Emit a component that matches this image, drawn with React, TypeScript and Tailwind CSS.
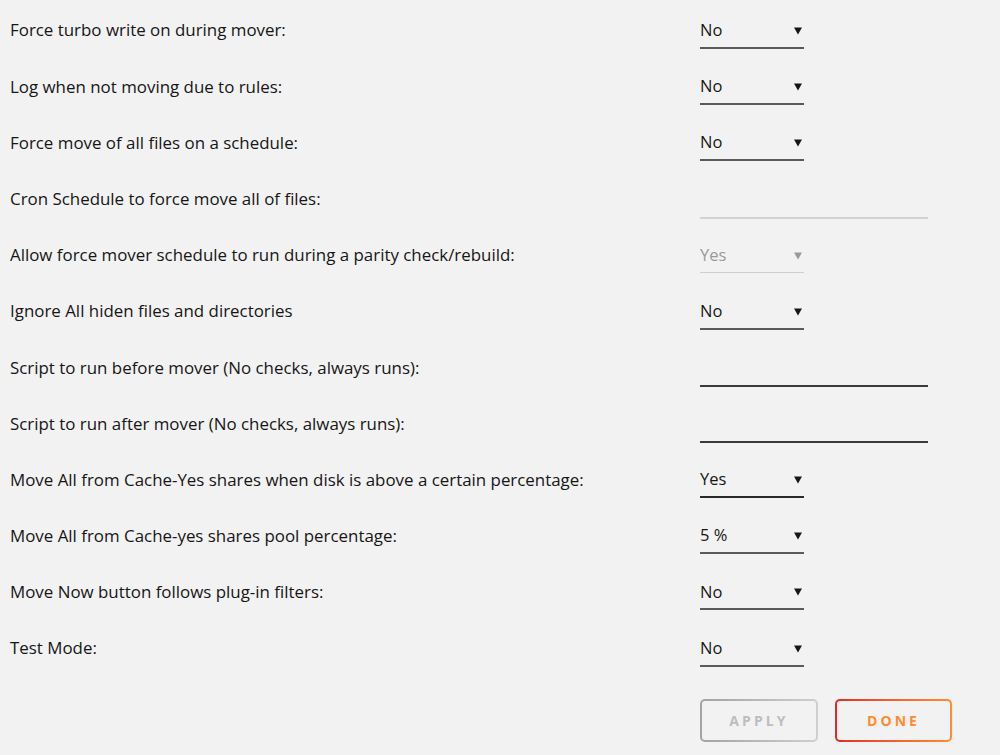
import type { ReactNode } from 'react';

type Field =
  | { kind: 'select'; value: string; disabled?: boolean; dark?: boolean }
  | { kind: 'input'; tone: 'light' | 'dark' };

interface Row {
  label: string;
  field: Field;
}

const rows: Row[] = [
  { label: 'Force turbo write on during mover:', field: { kind: 'select', value: 'No' } },
  { label: 'Log when not moving due to rules:', field: { kind: 'select', value: 'No' } },
  { label: 'Force move of all files on a schedule:', field: { kind: 'select', value: 'No' } },
  { label: 'Cron Schedule to force move all of files:', field: { kind: 'input', tone: 'light' } },
  {
    label: 'Allow force mover schedule to run during a parity check/rebuild:',
    field: { kind: 'select', value: 'Yes', disabled: true },
  },
  { label: 'Ignore All hiden files and directories', field: { kind: 'select', value: 'No' } },
  { label: 'Script to run before mover (No checks, always runs):', field: { kind: 'input', tone: 'dark' } },
  { label: 'Script to run after mover (No checks, always runs):', field: { kind: 'input', tone: 'dark' } },
  {
    label: 'Move All from Cache-Yes shares when disk is above a certain percentage:',
    field: { kind: 'select', value: 'Yes', dark: true },
  },
  { label: 'Move All from Cache-yes shares pool percentage:', field: { kind: 'select', value: '5 %' } },
  { label: 'Move Now button follows plug-in filters:', field: { kind: 'select', value: 'No' } },
  { label: 'Test Mode:', field: { kind: 'select', value: 'No' } },
];

function Select({ value, disabled, dark }: { value: string; disabled?: boolean; dark?: boolean }) {
  const line = disabled
    ? 'border-b border-[#cfcfcf]'
    : dark
      ? 'border-b-2 border-[#2a2a2a]'
      : 'border-b-2 border-[#5a5a5a]';
  const color = disabled ? 'text-[#9a9a9a]' : 'text-[#161616]';
  return (
    <div className={`flex h-[37px] w-[104px] items-center justify-between ${line}`}>
      <span className={`pt-[2px] text-[16.5px] ${color}`}>{value}</span>
      <svg width="8" height="8" viewBox="0 0 8 8" className={`mr-[2px] mt-[3px] ${color}`}>
        <path d="M0 0.5 L8 0.5 L4 7.5 Z" fill="currentColor" />
      </svg>
    </div>
  );
}

function TextInput({ tone }: { tone: 'light' | 'dark' }) {
  const line = tone === 'light' ? 'border-b-2 border-[#d2d2d2]' : 'border-b-2 border-[#3a3a3a]';
  return <div className={`mt-[3px] h-[37px] w-[228px] ${line}`} />;
}

function GradientButton({ children, from, to, text }: { children: ReactNode; from: string; to: string; text: string }) {
  return (
    <div className={`rounded-[5px] bg-gradient-to-r p-[2px] ${from} ${to}`}>
      <div className={`flex h-[39px] items-center justify-center rounded-[3px] bg-[#f2f2f2] text-[14px] font-bold tracking-[0.22em] ${text}`}>
        {children}
      </div>
    </div>
  );
}

export default function App() {
  return (
    <div
      className="min-h-[755px] w-[1000px] bg-[#f2f2f2] pt-[2px] text-[#161616]"
      style={{ fontFamily: '"Open Sans", "Noto Sans", sans-serif' }}
    >
      <div className="flex flex-col">
        {rows.map((row) => (
          <div key={row.label} className="flex h-[56.2px] items-center">
            <div className="w-[700px] pl-[10px] text-[16.9px]">{row.label}</div>
            {row.field.kind === 'select' ? (
              <Select value={row.field.value} disabled={row.field.disabled} dark={row.field.dark} />
            ) : (
              <TextInput tone={row.field.tone} />
            )}
          </div>
        ))}
      </div>
      <div className="mt-[23px] flex gap-[17px] pl-[700px]">
        <div className="w-[118px]">
          <GradientButton from="from-[#a3a3a3]" to="to-[#cfcfcf]" text="text-[#bdbdbd]">
            APPLY
          </GradientButton>
        </div>
        <div className="w-[117px]">
          <GradientButton from="from-[#e22828]" to="to-[#ff8c2f]" text="text-[#ff8c2f]">
            DONE
          </GradientButton>
        </div>
      </div>
    </div>
  );
}
